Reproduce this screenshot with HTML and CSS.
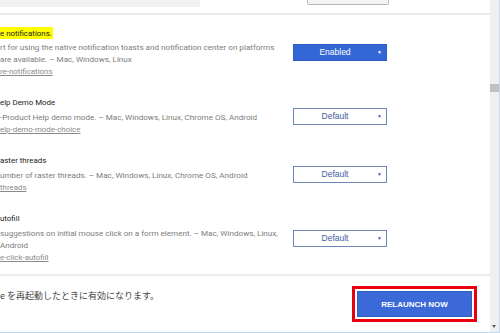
FILE: index.html
```html
<!DOCTYPE html>
<html lang="ja">
<head>
  <meta charset="UTF-8">
  <meta name="viewport" content="width=device-width, initial-scale=1.0">
  <title>chrome://flags</title>
  <link rel="stylesheet" href="styles.css">
</head>
<body>
  <div class="window">
    <div class="page">
      <div class="header">
        <div class="search"></div>
        <div class="reset-btn"></div>
      </div>

      <div class="flags">
        <div class="flag">
          <div class="flag-text">
            <div class="flag-name"><mark>e notifications.</mark></div>
            <div class="flag-desc">rt for using the native notification toasts and notification center on platforms<br>are available. – Mac, Windows, Linux</div>
            <div class="flag-link">re-notifications</div>
          </div>
          <div class="select enabled">Enabled<span class="arrow">▼</span></div>
        </div>

        <div class="flag">
          <div class="flag-text">
            <div class="flag-name">elp Demo Mode</div>
            <div class="flag-desc">-Product Help demo mode. – Mac, Windows, Linux, Chrome OS, Android</div>
            <div class="flag-link">elp-demo-mode-choice</div>
          </div>
          <div class="select">Default<span class="arrow">▼</span></div>
        </div>

        <div class="flag">
          <div class="flag-text">
            <div class="flag-name">aster threads</div>
            <div class="flag-desc">umber of raster threads. – Mac, Windows, Linux, Chrome OS, Android</div>
            <div class="flag-link">threads</div>
          </div>
          <div class="select">Default<span class="arrow">▼</span></div>
        </div>

        <div class="flag">
          <div class="flag-text">
            <div class="flag-name">utofill</div>
            <div class="flag-desc">suggestions on initial mouse click on a form element. – Mac, Windows, Linux,<br>Android</div>
            <div class="flag-link">e-click-autofill</div>
          </div>
          <div class="select">Default<span class="arrow">▼</span></div>
        </div>
      </div>

      <div class="footer">
        <div class="footer-text">e を再起動したときに有効になります。</div>
        <button class="relaunch">RELAUNCH NOW</button>
      </div>
    </div>

    <div class="scrollbar">
      <div class="thumb"></div>
      <div class="down"></div>
    </div>
  </div>
</body>
</html>
```

FILE: styles.css
```css
* {
  margin: 0;
  padding: 0;
  box-sizing: border-box;
}

body {
  width: 500px;
  height: 333px;
  overflow: hidden;
  background-color: #fff;
  font-family: Roboto, 'Noto Sans CJK JP', sans-serif;
}

.window {
  height: 333px;
  display: flex;
  border-bottom: 1px solid #c3d9ee;
  border-right: 1px solid #c3d9ee;
}

.page {
  flex: 1;
  display: flex;
  flex-direction: column;
  overflow: hidden;
}

/* header */
.header {
  height: 15px;
  flex-shrink: 0;
  display: flex;
  align-items: flex-start;
  border-bottom: 2px solid #ececec;
}

.search {
  width: 200px;
  height: 7px;
  background-color: #f1f1f1;
}

.reset-btn {
  width: 82px;
  height: 5px;
  margin-left: 107px;
  border: 1px solid #b9b9b9;
  border-top: none;
  border-radius: 0 0 2px 2px;
  background-color: #f3f3f3;
}

/* flags list */
.flags {
  flex: 1;
  padding-top: 3px;
}

.flag {
  display: flex;
  align-items: center;
  padding: 8px 0 9px;
}

.flag-text {
  width: 293px;
  white-space: nowrap;
}

.flag-name {
  font-size: 7.9px;
  line-height: 14px;
  color: #1c1c1c;
  margin-bottom: 1px;
}

.flag-name mark {
  background-color: #ffff00;
  color: #1c1c1c;
  padding: 1.5px 1px 1.5px 0;
}

.flag-desc {
  font-size: 8.1px;
  line-height: 12px;
  color: #7d7d7d;
}

.flag-link {
  font-size: 7.9px;
  line-height: 14px;
  color: #8a8a8a;
  text-decoration: underline;
}

.select {
  position: relative;
  width: 94px;
  height: 17px;
  border: 1px solid #6f86ba;
  background-color: #fff;
  color: #3f5d9c;
  font-family: 'Liberation Sans', Arial, sans-serif;
  font-size: 8.5px;
  line-height: 15px;
  text-align: center;
  padding-right: 10px;
}

.select.enabled {
  background-color: #3367d6;
  border-color: #2d5cc6;
  color: #fff;
}

.select .arrow {
  position: absolute;
  right: 4px;
  top: 0;
  font-size: 5px;
}

/* footer */
.footer {
  height: 58px;
  flex-shrink: 0;
  display: flex;
  align-items: flex-start;
  padding-top: 13px;
  border-top: 2px solid #ececec;
}

.footer-text {
  font-family: 'Noto Sans CJK JP', sans-serif;
  font-size: 9px;
  line-height: 14px;
  color: #444;
  white-space: nowrap;
}

.relaunch {
  width: 115px;
  height: 26px;
  margin: 2px 18px 0 auto;
  border: 1px solid #2f5ec9;
  border-radius: 0;
  background-color: #3b6ad8;
  color: #fff;
  font-family: 'Liberation Sans', Arial, sans-serif;
  font-weight: bold;
  font-size: 8px;
  outline: 3px solid #e8000e;
  outline-offset: 2px;
}

/* scrollbar */
.scrollbar {
  width: 9px;
  display: flex;
  flex-direction: column;
  background-color: #f0f0f0;
}

.thumb {
  height: 8px;
  margin-top: 84px;
  background-color: #c1c1c1;
}

.down {
  margin: auto 0 4px 2px;
  width: 0;
  height: 0;
  border-left: 2.5px solid transparent;
  border-right: 2.5px solid transparent;
  border-top: 3px solid #606060;
}
```
